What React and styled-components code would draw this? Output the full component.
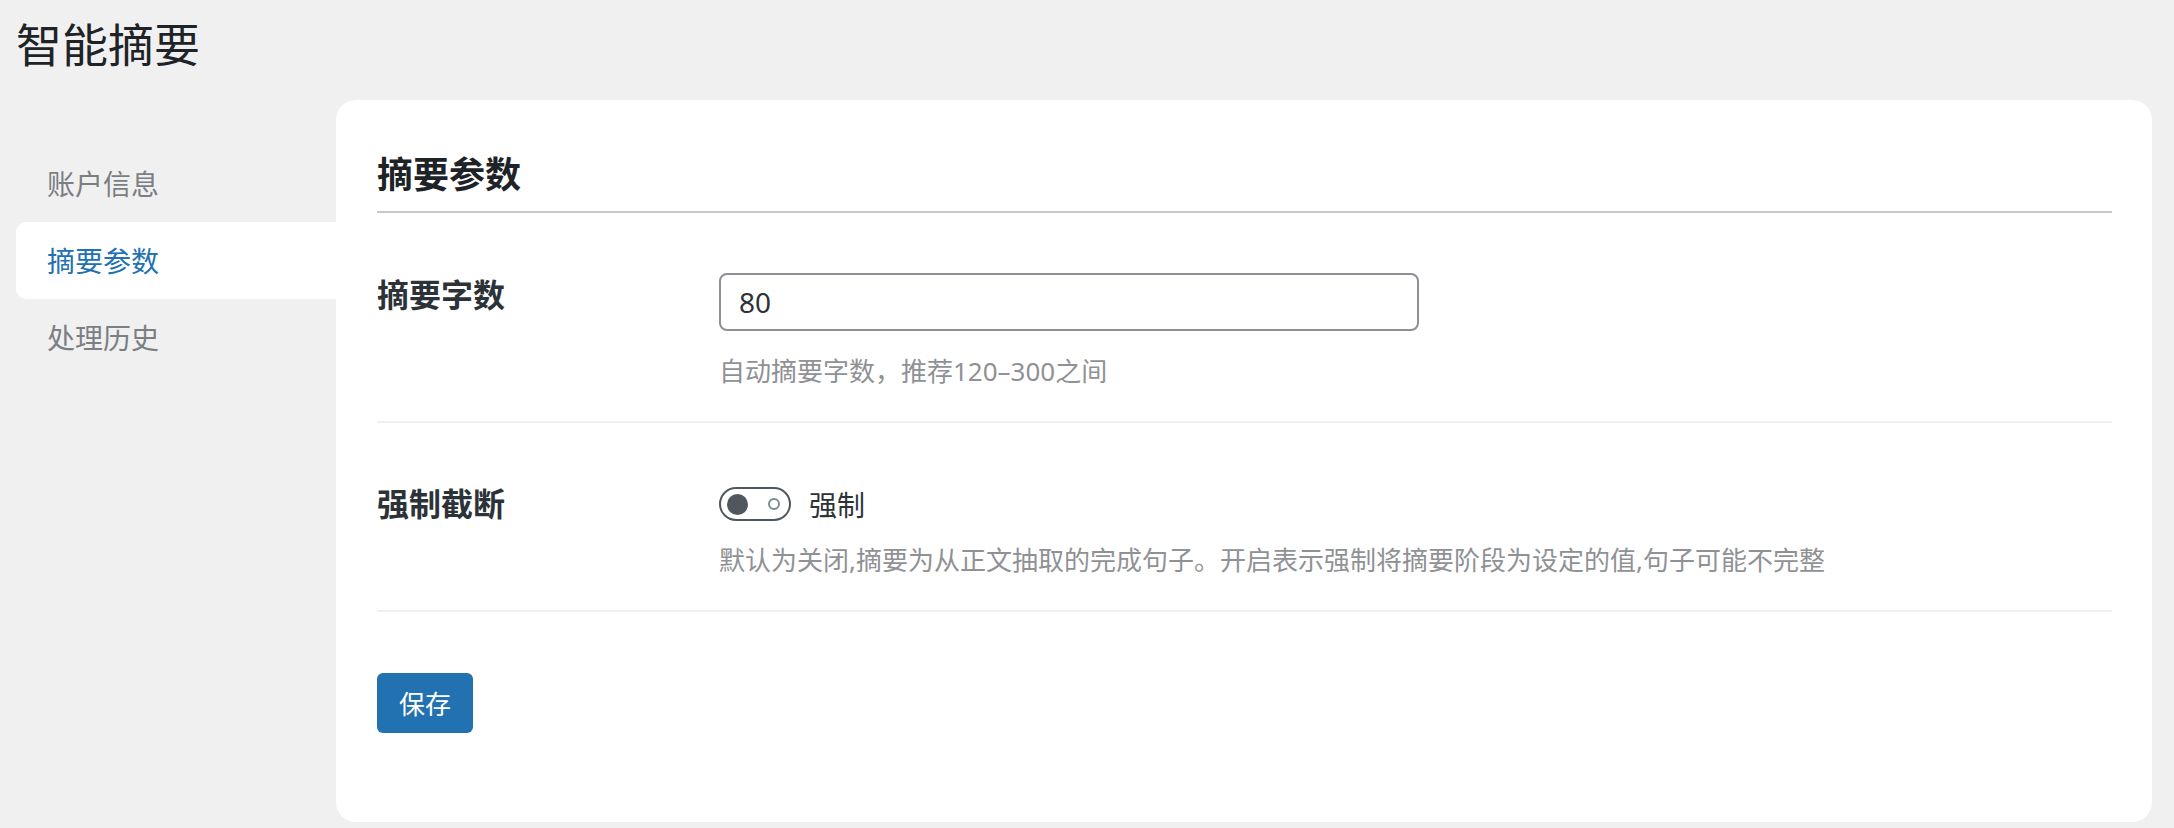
import React from "react";
import styled, {createGlobalStyle} from "styled-components";

const GlobalStyle = createGlobalStyle`
  html, body {
    margin: 0;
    padding: 0;
    background: #f0f0f1;
  }
  body {
    font-family: "Noto Sans", "Noto Sans CJK SC", sans-serif;
    color: #1d2327;
  }
`;

const menu = [
    {id: "account", label: "账户信息"},
    {id: "params", label: "摘要参数"},
    {id: "history", label: "处理历史"},
];

const App = () => {
    return (
        <StyledPage>
            <GlobalStyle/>
            <StyledHeading>智能摘要</StyledHeading>

            <StyledLayout>
                <StyledSidebar>
                    {menu.map((item) => (
                        <StyledNavItem key={item.id} $active={item.id === "params"}>
                            {item.label}
                        </StyledNavItem>
                    ))}
                </StyledSidebar>

                <StyledCard>
                    <StyledCardTitle>摘要参数</StyledCardTitle>

                    <StyledRow>
                        <StyledLabel>摘要字数</StyledLabel>
                        <StyledField>
                            <StyledInput type="text" defaultValue="80"/>
                            <StyledHelp>自动摘要字数，推荐120–300之间</StyledHelp>
                        </StyledField>
                    </StyledRow>

                    <StyledRow $top={58}>
                        <StyledLabel>强制截断</StyledLabel>
                        <StyledField>
                            <StyledSwitchLine>
                                <StyledToggle>
                                    <span className="knob"/>
                                    <span className="ring"/>
                                </StyledToggle>
                                强制
                            </StyledSwitchLine>
                            <StyledHelp $gap={20}>
                                默认为关闭,摘要为从正文抽取的完成句子。开启表示强制将摘要阶段为设定的值,句子可能不完整
                            </StyledHelp>
                        </StyledField>
                    </StyledRow>

                    <StyledButton>保存</StyledButton>
                </StyledCard>
            </StyledLayout>
        </StyledPage>
    );
};

const StyledPage = styled.div`
  padding: 12px 22px 6px 16px;
`;

const StyledHeading = styled.h1`
  margin: 0 0 28px 0;
  font-family: "Noto Sans CJK SC", sans-serif;
  font-size: 46px;
  font-weight: 400;
  line-height: 60px;
  color: #1d2327;
`;

const StyledLayout = styled.div`
  display: flex;
  align-items: flex-start;
`;

const StyledSidebar = styled.nav`
  width: 320px;
  flex-shrink: 0;
  padding-top: 45px;
  display: flex;
  flex-direction: column;
`;

const StyledNavItem = styled.div`
  height: 77px;
  line-height: 77px;
  padding-left: 31px;
  font-family: "Noto Sans CJK SC", sans-serif;
  font-size: 28px;
  color: ${(p) => (p.$active ? "#2271b1" : "#7b7e82")};
  background: ${(p) => (p.$active ? "#fff" : "transparent")};
  border-radius: 10px 0 0 10px;
`;

const StyledCard = styled.section`
  flex: 1;
  background: #fff;
  border-radius: 20px;
  padding: 47px 40px 89px 41px;
`;

const StyledCardTitle = styled.h2`
  margin: 0;
  padding-bottom: 14px;
  border-bottom: 2px solid #c8c9cb;
  font-family: "Noto Sans CJK SC", sans-serif;
  font-size: 36px;
  font-weight: 700;
  line-height: 50px;
  color: #1d2327;
`;

const StyledRow = styled.div`
  display: grid;
  grid-template-columns: 342px 1fr;
  padding: ${(p) => p.$top || 59}px 0 30px;
  border-bottom: 2px solid #f0f0f1;
`;

const StyledLabel = styled.div`
  font-family: "Noto Sans CJK SC", sans-serif;
  font-size: 32px;
  font-weight: 700;
  line-height: 42px;
  color: #2c3338;
`;

const StyledField = styled.div`
  display: flex;
  flex-direction: column;
  align-items: flex-start;
`;

const StyledInput = styled.input`
  box-sizing: border-box;
  margin-top: 1px;
  width: 700px;
  height: 58px;
  padding: 0 18px;
  border: 2px solid #8c8f94;
  border-radius: 8px;
  font-family: "Noto Sans", "Noto Sans CJK SC", sans-serif;
  font-size: 28px;
  color: #2c3338;
  outline: none;
`;

const StyledHelp = styled.p`
  margin: ${(p) => p.$gap || 21}px 0 0 0;
  font-family: "Noto Sans", "Noto Sans CJK SC", sans-serif;
  font-size: 26px;
  line-height: 39px;
  color: #8f9194;
`;

const StyledSwitchLine = styled.label`
  display: flex;
  align-items: center;
  gap: 18px;
  margin-top: 6px;
  height: 34px;
  font-family: "Noto Sans CJK SC", sans-serif;
  font-size: 28px;
  color: #2c3338;
`;

const StyledToggle = styled.span`
  box-sizing: border-box;
  display: flex;
  align-items: center;
  justify-content: space-between;
  width: 72px;
  height: 34px;
  padding: 0 9px 0 6px;
  border: 2px solid #50575e;
  border-radius: 17px;

  .knob {
    width: 21px;
    height: 21px;
    border-radius: 50%;
    background: #50575e;
  }

  .ring {
    box-sizing: border-box;
    width: 12px;
    height: 12px;
    border-radius: 50%;
    border: 2px solid #7e8993;
  }
`;

const StyledButton = styled.button`
  display: block;
  margin-top: 61px;
  height: 60px;
  padding: 0 22px;
  border: none;
  border-radius: 6px;
  background: #2271b1;
  color: #fff;
  font-family: "Noto Sans CJK SC", sans-serif;
  font-size: 26px;
  line-height: 60px;
  cursor: pointer;
`;

export default App;
